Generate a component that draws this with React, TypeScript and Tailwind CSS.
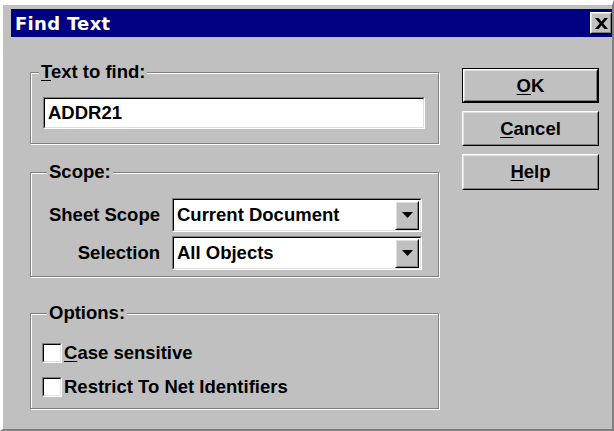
import type { ReactNode } from 'react';

// classic 3D bevels
function Raised({ children, className = '' }: { children?: ReactNode; className?: string }) {
  return (
    <div className={`border border-t-white border-l-white border-r-black border-b-black ${className}`}>
      <div className="flex h-full w-full items-center justify-center border border-t-[#dfdfdf] border-l-[#dfdfdf] border-r-[#808080] border-b-[#808080] bg-[#c0c0c0]">
        {children}
      </div>
    </div>
  );
}

function Sunken({ children, className = '' }: { children?: ReactNode; className?: string }) {
  return (
    <div className={`border border-t-[#808080] border-l-[#808080] border-r-white border-b-white ${className}`}>
      <div className="flex h-full w-full items-center border border-t-black border-l-black border-r-[#dfdfdf] border-b-[#dfdfdf] bg-white">
        {children}
      </div>
    </div>
  );
}

function GroupBox({
  label,
  className = '',
  labelClass = 'left-[16px]',
  children,
}: {
  label: ReactNode;
  className?: string;
  labelClass?: string;
  children: ReactNode;
}) {
  return (
    <div
      className={`relative w-[409px] border border-[#808080] shadow-[inset_1px_1px_0_#fff,1px_1px_0_#fff] ${className}`}
    >
      <span className={`absolute top-[-12px] bg-[#c0c0c0] px-[2px] leading-[22px] ${labelClass}`}>{label}</span>
      {children}
    </div>
  );
}

function Combo({ value }: { value: string }) {
  return (
    <Sunken className="h-[34px] w-[250px]">
      <span className="flex-1 pl-[3px]">{value}</span>
      <Raised className="mr-[1px] h-[29px] w-[24px]">
        <svg width="11" height="6" viewBox="0 0 11 6">
          <path d="M0 0h11L5.5 6z" fill="#000" />
        </svg>
      </Raised>
    </Sunken>
  );
}

function Check({ label }: { label: ReactNode }) {
  return (
    <div className="flex h-[20px] items-center gap-[2px]">
      <Sunken className="h-[20px] w-[20px]" />
      <span className="leading-[20px]">{label}</span>
    </div>
  );
}

export default function App() {
  return (
    <div className="h-[431px] w-[614px] overflow-hidden border-t-[5px] border-l-[3px] border-r-2 border-b-2 border-t-white border-l-white border-r-[#808080] border-b-[#808080] bg-[#c0c0c0] pl-[8px] pt-[4px] font-['Liberation_Sans',Arial,sans-serif] text-[18.5px] font-bold text-black">
      {/* title bar */}
      <div className="flex h-[28px] items-center justify-between bg-[#000080] pl-[4px] pr-[0px]">
        <span className="font-['DejaVu_Sans',sans-serif] text-[18px] font-bold tracking-[0.3px] text-white">Find Text</span>
        <Raised className="h-[22px] w-[22px]">
          <svg width="13" height="11" viewBox="0 0 13 11">
            <path d="M0 0h3.5l3 3.6 3-3.6H13L8.3 5.5 13 11H9.5l-3-3.6-3 3.6H0l4.7-5.5z" fill="#000" />
          </svg>
        </Raised>
      </div>

      <div className="flex pl-[19px]">
        {/* left column: group boxes */}
        <div className="flex flex-col">
          <GroupBox
            className="mt-[35px] h-[72px] pl-[12px] pt-[24px]"
            labelClass="left-[8px]"
            label={
              <>
                <u className="underline-offset-2">T</u>ext to find:
              </>
            }
          >
            <Sunken className="h-[32px] w-[382px]">
              <span className="pl-[3px]">ADDR21</span>
            </Sunken>
          </GroupBox>

          <GroupBox className="mt-[28px] h-[105px] pt-[25px]" label="Scope:">
            <div className="grid grid-cols-[129px_250px] items-center gap-x-[12px] gap-y-[4px]">
              <span className="text-right">Sheet Scope</span>
              <Combo value="Current Document" />
              <span className="text-right">Selection</span>
              <Combo value="All Objects" />
            </div>
          </GroupBox>

          <GroupBox className="mt-[36px] h-[96px] pl-[11px] pt-[29px]" label="Options:">
            <div className="flex flex-col gap-[14px]">
              <Check
                label={
                  <>
                    <u className="underline-offset-2">C</u>ase sensitive
                  </>
                }
              />
              <Check label="Restrict To Net Identifiers" />
            </div>
          </GroupBox>
        </div>

        {/* right column: buttons */}
        <div className="ml-[23px] flex flex-col gap-[8px] pt-[31px]">
          <div className="h-[35px] w-[137px] border border-black">
            <Raised className="h-full w-full">
              <span>
                <u className="underline-offset-2">O</u>K
              </span>
            </Raised>
          </div>
          <Raised className="h-[35px] w-[137px]">
            <span>
              <u className="underline-offset-2">C</u>ancel
            </span>
          </Raised>
          <Raised className="h-[36px] w-[137px]">
            <span>
              <u className="underline-offset-2">H</u>elp
            </span>
          </Raised>
        </div>
      </div>
    </div>
  );
}
